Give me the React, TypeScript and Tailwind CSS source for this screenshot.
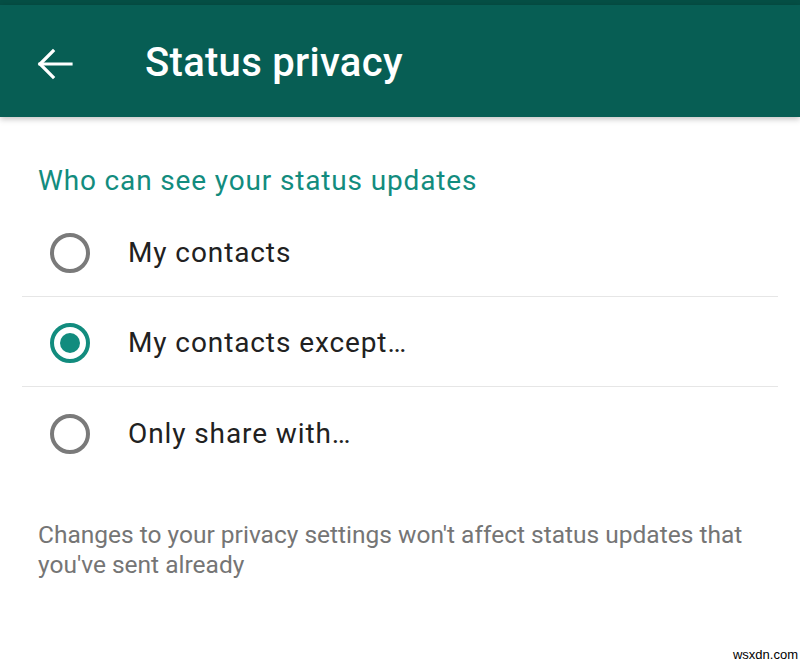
export default function App() {
  const options = [
    { label: "My contacts", checked: false },
    { label: "My contacts except…", checked: true },
    { label: "Only share with…", checked: false },
  ];

  return (
    <div className="relative w-[800px] h-[665px] bg-white overflow-hidden font-['Roboto',sans-serif]">
      <div className="h-[5px] bg-[#054f45]" />
      <header className="h-[112px] bg-[#075e54] flex items-center pt-[4px] shadow-[0_2px_6px_rgba(0,0,0,0.25)]">
        <div className="w-[145px] pl-[37px] pt-[2px]">
          <svg width="36" height="32" viewBox="0 0 36 32" fill="none" stroke="white" strokeWidth="3.2" strokeLinecap="square">
            <path d="M34 16H3" />
            <path d="M16 3L3 16l13 13" />
          </svg>
        </div>
        <h1 className="text-white text-[40px] font-medium tracking-[0.3px]">Status privacy</h1>
      </header>

      <div className="pt-[47px]">
        <h2 className="pl-[38px] text-[#128c7e] text-[28px] leading-[34px] tracking-[0.85px]">Who can see your status updates</h2>
        <div className="mx-[22px] mt-[9px]">
          {options.map((o, i) => (
            <div
              key={o.label}
              className={`h-[90px] flex items-center pt-[3px] ${i < options.length - 1 ? "border-b border-[#e6e6e6]" : ""}`}
            >
              <div className="w-[106px] pl-[28px]">
                {o.checked ? (
                  <div className="w-[40px] h-[40px] rounded-full border-[4px] border-[#128c7e] flex items-center justify-center">
                    <div className="w-[20px] h-[20px] rounded-full bg-[#128c7e]" />
                  </div>
                ) : (
                  <div className="w-[40px] h-[40px] rounded-full border-[4px] border-[#7a7a7a]" />
                )}
              </div>
              <span className="text-[28px] text-[#212121] tracking-[0.9px]">{o.label}</span>
            </div>
          ))}
        </div>
        <p className="mt-[43px] pl-[38px] pr-[40px] text-[24.5px] leading-[30px] text-[#757575]">
          Changes to your privacy settings won't affect status updates that you've sent already
        </p>
      </div>

      <span className="absolute right-[2px] bottom-[1px] text-[13px] text-black font-['Liberation_Sans',sans-serif]">wsxdn.com</span>
    </div>
  );
}
